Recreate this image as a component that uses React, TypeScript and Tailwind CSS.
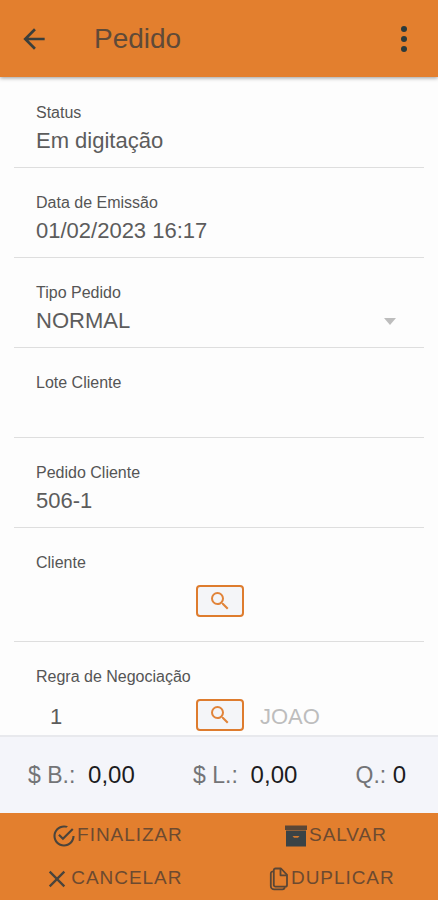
import type { ReactNode } from "react";
import { MdArrowBack, MdSearch } from "react-icons/md";
import { IoMdCheckmarkCircleOutline, IoMdClose } from "react-icons/io";
import { IoEllipsisVertical } from "react-icons/io5";

const fieldText =
  "h-7 w-full min-w-0 appearance-none bg-transparent text-[22px] leading-7 text-[#5c5c5c] outline-none";

function Field({ id, label, children }: { id: string; label: string; children: ReactNode }) {
  return (
    <div className="flex min-h-[90px] flex-col border-b border-[#dedede] px-[22px] pt-[25px]">
      <label htmlFor={id} className="text-base leading-5 text-[#555]">
        {label}
      </label>
      {children}
    </div>
  );
}

function TextField({ id, label, value }: { id: string; label: string; value: string }) {
  return (
    <Field id={id} label={label}>
      <input id={id} type="text" defaultValue={value} className={"mt-1 " + fieldText} />
    </Field>
  );
}

function LookupField({
  id,
  label,
  value,
  description,
}: {
  id: string;
  label: string;
  value: string;
  description: string;
}) {
  return (
    <Field id={id} label={label}>
      <div className="mt-3 mb-6 flex h-8 items-end">
        <input id={id} type="text" defaultValue={value} className={"max-w-[160px] pl-3.5 " + fieldText} />
        <button
          type="button"
          aria-label={"Pesquisar " + label}
          className="flex h-8 w-12 shrink-0 items-center justify-center rounded border-2 border-[#de7c2e] bg-[#f4f5f8] text-[#e1843a]"
        >
          <MdSearch className="size-6" />
        </button>
        <span className="ml-4 text-[22px] leading-7 text-[#bdbdbd]">{description}</span>
      </div>
    </Field>
  );
}

function Total({ label, value }: { label: string; value: string }) {
  return (
    <div className="flex items-baseline">
      <dt className="text-[23px] text-[#737477]">{label}</dt>
      <dd className="text-2xl text-[#1c1c1e]">{value}</dd>
    </div>
  );
}

function ArchiveIcon() {
  return (
    <svg viewBox="0 0 22 22" className="mr-0.5 size-[22px]" aria-hidden="true">
      <path d="M0 0.5h22v4.5H0z" fill="#5a4636" />
      <path d="M1 5.5h20V21.5H1z" fill="#3b4346" />
      <path d="M7.5 11h7l-1.5 1.8h-4z" fill="#d3792f" />
    </svg>
  );
}

function PagesIcon() {
  return (
    <svg
      viewBox="0 0 20 24"
      className="mr-0.5 h-6 w-5"
      fill="none"
      stroke="#5a4636"
      strokeWidth="1.8"
      strokeLinejoin="round"
      aria-hidden="true"
    >
      <path d="M6.5 1.5H12l6 6.3V18a1.7 1.7 0 0 1-1.7 1.7H6.5A1.7 1.7 0 0 1 4.8 18V3.200A1.700 1.700 0 0 1 6.500 1.500z" />
      <path d="M11.500 1.800V8.300H17.800" />
      <path d="M4.500 4.300C2.800 4.300 1.800 5 1.800 6.500V19a3.400 3.400 0 0 0 3.400 3.400h8.300c1.300 0 2.100-0.800 2.300-2.200" />
    </svg>
  );
}

function Action({ icon, label }: { icon: ReactNode; label: string }) {
  return (
    <button
      type="button"
      className="flex h-[43px] items-center text-[19px] tracking-wider text-[#6d4a30]"
    >
      {icon}
      {label}
    </button>
  );
}

export default function App() {
  return (
    <div className="flex h-screen flex-col bg-[#fdfdfd] font-['Liberation_Sans',Arial,sans-serif]">
      <header className="relative flex h-[77px] shrink-0 items-center bg-[#e37f2e] px-[18px] shadow-[0_1px_4px_rgba(0,0,0,0.4)]">
        <button type="button" aria-label="Voltar" className="text-[#3b3f3c]">
          <MdArrowBack className="size-8" />
        </button>
        <h1 className="ml-11 flex-1 text-[28px] leading-8 text-[#5f4a38]">Pedido</h1>
        <button type="button" aria-label="Mais opções" className="text-[#2b3a3c]">
          <IoEllipsisVertical className="size-8" />
        </button>
      </header>

      <main className="min-h-0 flex-1 overflow-y-auto px-3.5 pt-px [scrollbar-width:none]">
        <TextField id="status" label="Status" value="Em digitação" />
        <TextField id="emissao" label="Data de Emissão" value="01/02/2023 16:17" />
        <Field id="tipo" label="Tipo Pedido">
          <div className="mt-1 flex items-center">
            <select id="tipo" className={fieldText} defaultValue="NORMAL">
              <option>NORMAL</option>
            </select>
            <span className="mr-1.5 border-x-[6px] border-t-[7px] border-x-transparent border-t-[#bdbdbd]" />
          </div>
        </Field>
        <TextField id="lote" label="Lote Cliente" value="" />
        <TextField id="pedido" label="Pedido Cliente" value="506-1" />
        <LookupField id="cliente" label="Cliente" value="" description="" />
        <LookupField id="regra" label="Regra de Negociação" value="1" description="JOAO" />
      </main>

      <dl className="flex h-[78px] shrink-0 items-center justify-between border-t-2 border-[#e8e9ed] bg-[#f4f5fa] pr-8 pl-7">
        <Total label={"$ B.:\u00a0\u00a0"} value="0,00" />
        <Total label={"$ L.:\u00a0\u00a0"} value="0,00" />
        <Total label={"Q.:\u00a0"} value="0" />
      </dl>

      <footer className="shrink-0 bg-[#e37f2e] pt-px">
        <div className="flex justify-around">
          <Action icon={<IoMdCheckmarkCircleOutline className="size-[26px] text-[#4a443c]" />} label="FINALIZAR" />
          <Action icon={<ArchiveIcon />} label="SALVAR" />
        </div>
        <div className="flex justify-around">
          <Action icon={<IoMdClose className="size-7 text-[#4a443c]" />} label="CANCELAR" />
          <Action icon={<PagesIcon />} label="DUPLICAR" />
        </div>
      </footer>
    </div>
  );
}
